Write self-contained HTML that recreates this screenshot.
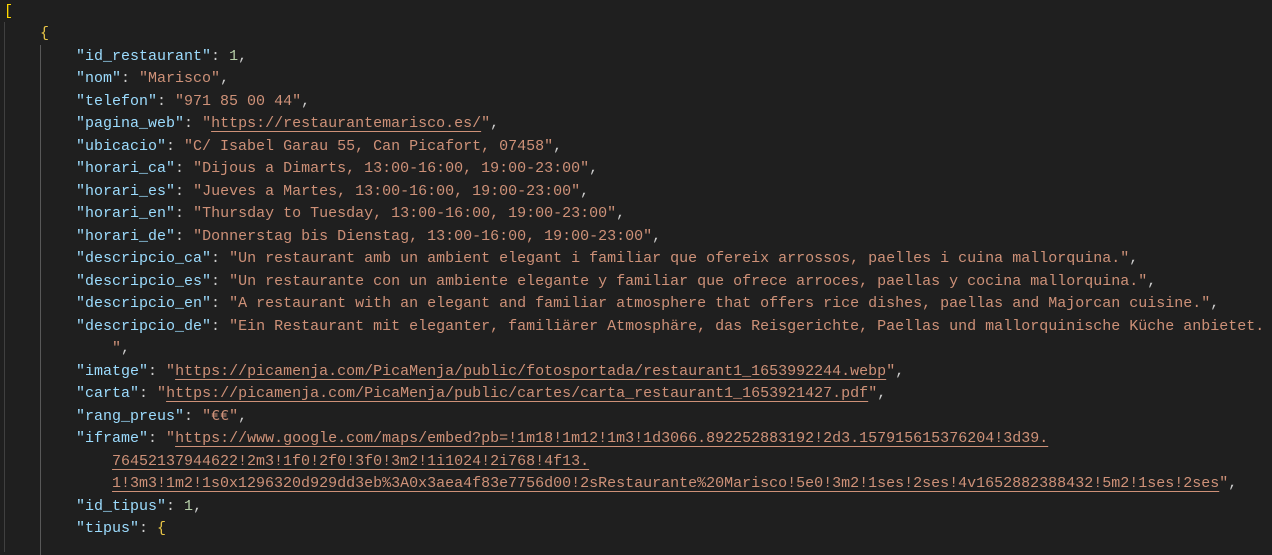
<!DOCTYPE html>
<html><head><meta charset="utf-8"><style>
html,body{margin:0;padding:0;background:#1f1f1f;width:1272px;height:542px;overflow:hidden}
#c{position:absolute;left:4px;top:1px;font-family:"Liberation Mono",monospace;font-size:15px;line-height:22.48px;color:#cccccc;white-space:pre}
.k{color:#9cdcfe}.s{color:#ce9178}.n{color:#b5cea8}.b{color:#ffd700}.p{color:#e8c547}
.u{text-decoration:underline;text-underline-offset:4px}
.g{position:absolute;width:1px;background:#404040}
</style></head><body>
<div class="g" style="left:4px;top:22px;height:530px"></div>
<div class="g" style="left:40px;top:45px;height:510px;background:#585858"></div>
<div id="c"><span class="b">[</span>
    <span class="p">{</span>
        <span class="k">"id_restaurant"</span>: <span class="n">1</span>,
        <span class="k">"nom"</span>: <span class="s">"Marisco"</span>,
        <span class="k">"telefon"</span>: <span class="s">"971 85 00 44"</span>,
        <span class="k">"pagina_web"</span>: <span class="s">"<span class="u">https://restaurantemarisco.es/</span>"</span>,
        <span class="k">"ubicacio"</span>: <span class="s">"C/ Isabel Garau 55, Can Picafort, 07458"</span>,
        <span class="k">"horari_ca"</span>: <span class="s">"Dijous a Dimarts, 13:00-16:00, 19:00-23:00"</span>,
        <span class="k">"horari_es"</span>: <span class="s">"Jueves a Martes, 13:00-16:00, 19:00-23:00"</span>,
        <span class="k">"horari_en"</span>: <span class="s">"Thursday to Tuesday, 13:00-16:00, 19:00-23:00"</span>,
        <span class="k">"horari_de"</span>: <span class="s">"Donnerstag bis Dienstag, 13:00-16:00, 19:00-23:00"</span>,
        <span class="k">"descripcio_ca"</span>: <span class="s">"Un restaurant amb un ambient elegant i familiar que ofereix arrossos, paelles i cuina mallorquina."</span>,
        <span class="k">"descripcio_es"</span>: <span class="s">"Un restaurante con un ambiente elegante y familiar que ofrece arroces, paellas y cocina mallorquina."</span>,
        <span class="k">"descripcio_en"</span>: <span class="s">"A restaurant with an elegant and familiar atmosphere that offers rice dishes, paellas and Majorcan cuisine."</span>,
        <span class="k">"descripcio_de"</span>: <span class="s">"Ein Restaurant mit eleganter, familiärer Atmosphäre, das Reisgerichte, Paellas und mallorquinische Küche anbietet.</span>
            <span class="s">"</span>,
        <span class="k">"imatge"</span>: <span class="s">"<span class="u">https://picamenja.com/PicaMenja/public/fotosportada/restaurant1_1653992244.webp</span>"</span>,
        <span class="k">"carta"</span>: <span class="s">"<span class="u">https://picamenja.com/PicaMenja/public/cartes/carta_restaurant1_1653921427.pdf</span>"</span>,
        <span class="k">"rang_preus"</span>: <span class="s">"€€"</span>,
        <span class="k">"iframe"</span>: <span class="s">"<span class="u">https://www.google.com/maps/embed?pb=!1m18!1m12!1m3!1d3066.892252883192!2d3.157915615376204!3d39.</span></span>
            <span class="s u">76452137944622!2m3!1f0!2f0!3f0!3m2!1i1024!2i768!4f13.</span>
            <span class="s"><span class="u">1!3m3!1m2!1s0x1296320d929dd3eb%3A0x3aea4f83e7756d00!2sRestaurante%20Marisco!5e0!3m2!1ses!2ses!4v1652882388432!5m2!1ses!2ses</span>"</span>,
        <span class="k">"id_tipus"</span>: <span class="n">1</span>,
        <span class="k">"tipus"</span>: <span class="p">{</span>
</div>
</body></html>
